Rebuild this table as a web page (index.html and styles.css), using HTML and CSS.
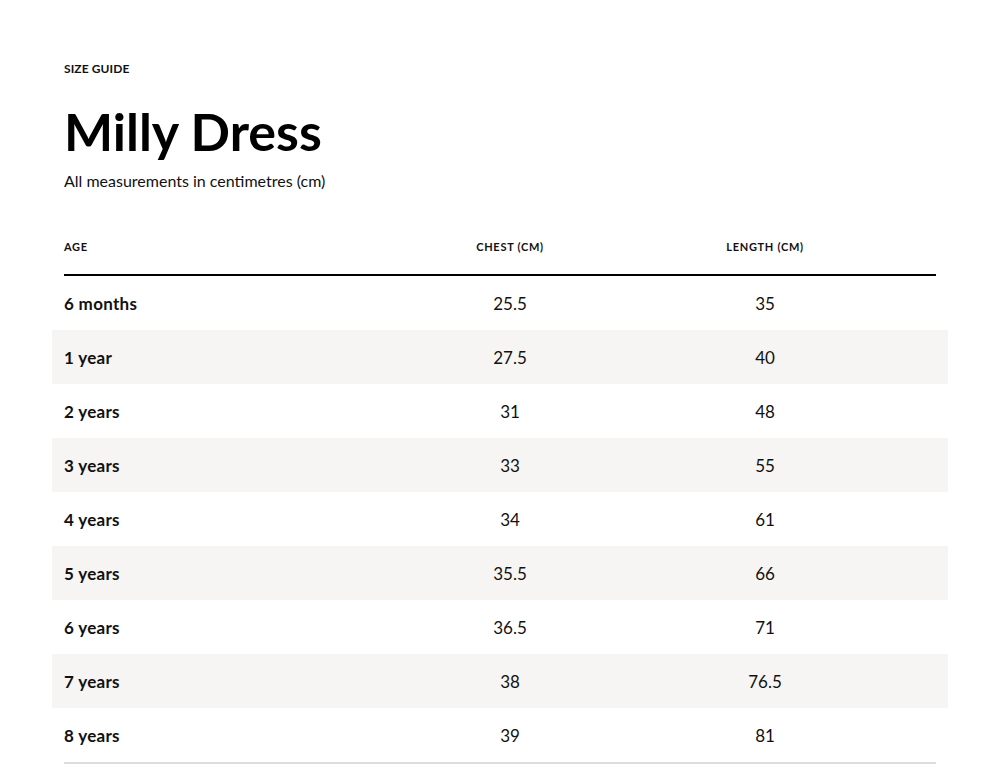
FILE: index.html
```html
<!DOCTYPE html>
<html>
<head>
<meta charset="utf-8">
<link rel="stylesheet" href="styles.css">
</head>
<body>
<main class="page">
  <p class="eyebrow">SIZE GUIDE</p>
  <h1 class="title">Milly Dress</h1>
  <p class="sub">All measurements in centimetres (cm)</p>
  <div class="table">
    <div class="row head">
      <div class="c age">AGE</div>
      <div class="c num">CHEST (CM)</div>
      <div class="c num">LENGTH (CM)</div>
    </div>
    <div class="row"><div class="c age">6 months</div><div class="c num">25.5</div><div class="c num">35</div></div>
    <div class="row alt"><div class="c age">1 year</div><div class="c num">27.5</div><div class="c num">40</div></div>
    <div class="row"><div class="c age">2 years</div><div class="c num">31</div><div class="c num">48</div></div>
    <div class="row alt"><div class="c age">3 years</div><div class="c num">33</div><div class="c num">55</div></div>
    <div class="row"><div class="c age">4 years</div><div class="c num">34</div><div class="c num">61</div></div>
    <div class="row alt"><div class="c age">5 years</div><div class="c num">35.5</div><div class="c num">66</div></div>
    <div class="row"><div class="c age">6 years</div><div class="c num">36.5</div><div class="c num">71</div></div>
    <div class="row alt"><div class="c age">7 years</div><div class="c num">38</div><div class="c num">76.5</div></div>
    <div class="row"><div class="c age">8 years</div><div class="c num">39</div><div class="c num">81</div></div>
  </div>
</main>
</body>
</html>
```

FILE: styles.css
```css
html, body {
  margin: 0;
  padding: 0;
  background: #ffffff;
  color: #111111;
  font-family: Lato, "Noto Sans", sans-serif;
}
.page {
  padding: 61px 64px 0 64px;
}
.eyebrow {
  margin: 0;
  font-size: 12px;
  font-weight: 700;
  line-height: 16px;
  letter-spacing: 0.1px;
}
.title {
  margin: 22px 0 0 0;
  font-size: 52px;
  font-weight: 700;
  line-height: 64px;
  color: #000;
}
.sub {
  margin: 8px 0 0 0;
  font-size: 16px;
  line-height: 20px;
}
.table {
  margin-top: 38px;
  border-bottom: 2px solid #dcdcd8;
}
.row {
  display: grid;
  grid-template-columns: 362px 168px 342px;
  height: 54px;
  align-items: center;
  margin: 0 -12px;
  padding: 0 12px;
}
.row.alt {
  background: #f6f5f3;
}
.row.head {
  align-items: start;
  padding-top: 10px;
  height: 35px;
  margin: 0;
  padding-left: 0;
  padding-right: 0;
  border-bottom: 2px solid #000;
}
.head .c {
  font-size: 11px;
  font-weight: 700;
  line-height: 16px;
  letter-spacing: 0.7px;
  padding-top: 0;
}
.c {
  font-size: 17px;
  line-height: 22px;
  padding-top: 2px;
}
.age {
  font-weight: 700;
  letter-spacing: 0.3px;
}
.num {
  text-align: center;
}
```
